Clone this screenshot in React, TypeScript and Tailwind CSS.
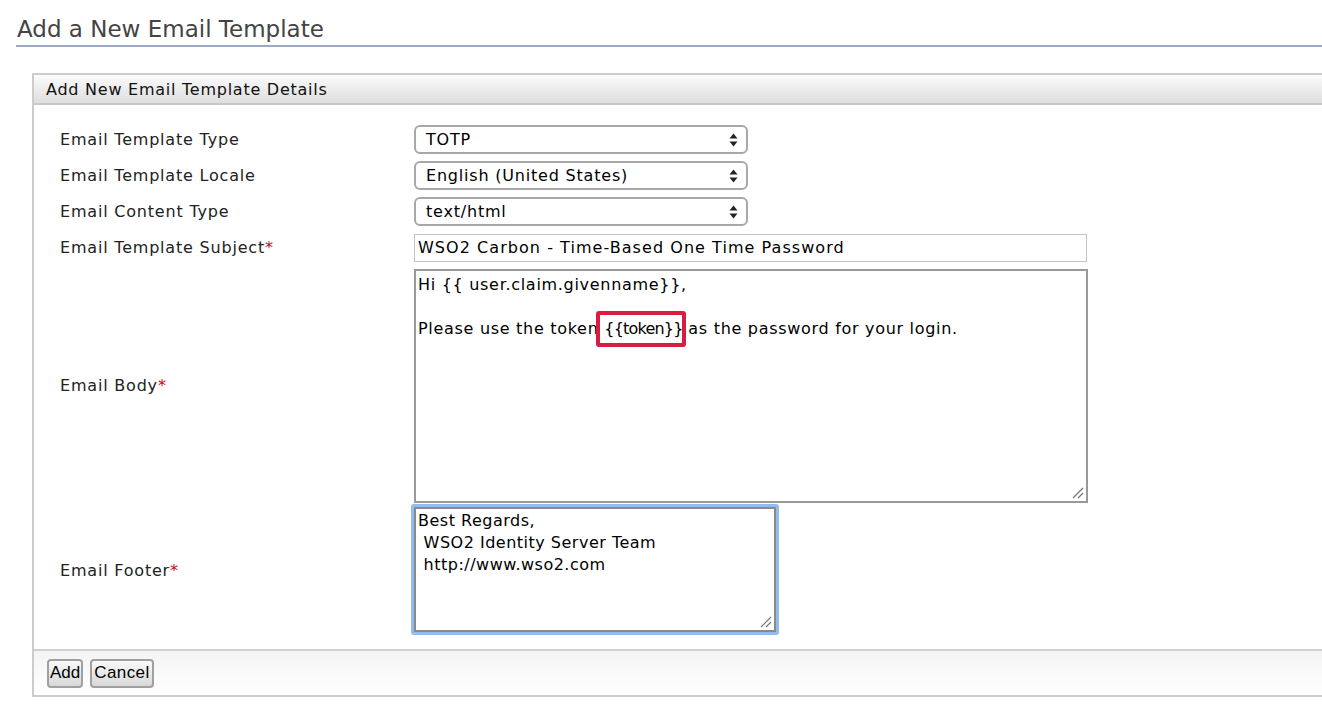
import React from "react";

function SelectArrows() {
  return (
    <svg width="9" height="14" viewBox="0 0 9 14" className="absolute right-[8px] top-1/2 -translate-y-1/2">
      <path d="M4.5 0.5 L8.5 5.5 L0.5 5.5 Z" fill="#222" />
      <path d="M4.5 13.5 L8.5 8.5 L0.5 8.5 Z" fill="#222" />
    </svg>
  );
}

function Grip() {
  return (
    <svg width="12" height="12" viewBox="0 0 12 12" className="absolute right-[2px] bottom-[2px]">
      <path d="M1 11 L11 1" stroke="#777" strokeWidth="1.2" />
      <path d="M6 11 L11 6" stroke="#777" strokeWidth="1.2" />
    </svg>
  );
}

function Select({ value }: { value: string }) {
  return (
    <div className="relative h-[29px] w-[334px] rounded-[6px] border-2 border-[#a8a8a8] bg-white pl-[10px] text-[16px] leading-[25px] tracking-[0.8px] text-black">
      {value}
      <SelectArrows />
    </div>
  );
}

function Label({ text, required }: { text: string; required?: boolean }) {
  return (
    <div className="flex items-center text-[16px] tracking-[0.8px] text-[#222]">
      {text}
      {required && <span className="text-[#d4001a]">*</span>}
    </div>
  );
}

export default function App() {
  const font = { fontFamily: '"DejaVu Sans", Verdana, sans-serif' };

  return (
    <div className="min-h-[726px] w-[1322px] overflow-hidden bg-white" style={font}>
      <div className="ml-4 border-b-2 border-[#9aaac8] pb-[1px] pt-[14px]">
        <h1 className="pl-[1px] text-[23px] leading-[30px] text-[#444]">Add a New Email Template</h1>
      </div>

      <div className="ml-[32px] mt-[26px] w-[1310px] border-2 border-r-0 border-[#cccccc]">
        <div className="h-[30px] border-b-2 border-[#c8c8c8] bg-gradient-to-b from-[#fbfbfb] to-[#dedede] pl-[12px] text-[16px] leading-[29px] tracking-[0.75px] text-[#111]">
          Add New Email Template Details
        </div>

        <div className="grid grid-cols-[354px_auto] gap-y-[7px] pb-[14px] pl-[26px] pt-[20px]">
          <Label text="Email Template Type" />
          <Select value="TOTP" />

          <Label text="Email Template Locale" />
          <Select value="English (United States)" />

          <Label text="Email Content Type" />
          <Select value="text/html" />

          <Label text="Email Template Subject" required />
          <div className="mt-[1px] h-[28px] w-[673px] border border-[#c4c4c4] bg-white pl-[3px] text-[16px] leading-[26px] tracking-[1.05px] text-black">
            WSO2 Carbon - Time-Based One Time Password
          </div>

          <Label text="Email Body" required />
          <div className="relative h-[234px] w-[674px] border-2 border-[#999] bg-white px-[2px] pt-[3px] text-[16px] leading-[22px] tracking-[0.7px] text-black">
            <div>Hi {"{{ user.claim.givenname}}"},</div>
            <div className="mt-[22px]">
              Please use the token{" "}
              <span className="relative tracking-[-0.8px]">
                {"{{token}}"}
                <span className="absolute -bottom-[9px] -left-[8px] -right-[3px] -top-[8px] rounded-[3px] border-[4px] border-[#d81e40]" />
              </span>{" "}
              as the password for your login.
            </div>
            <Grip />
          </div>

          <div className="-mt-[4px] flex items-center text-[16px] tracking-[0.8px] text-[#222]">
            Email Footer<span className="text-[#d4001a]">*</span>
          </div>
          <div className="-ml-[3px] -mt-[6px] w-[368px] rounded-[3px] border-[3px] border-[#8fbdf2] bg-white">
            <div className="relative h-[125px] border-2 border-[#8a8a8a] px-[2px] pt-[1px] text-[16px] leading-[22px] tracking-[0.5px] text-black">
              <div>Best Regards,</div>
              <div>&nbsp;WSO2 Identity Server Team</div>
              <div>&nbsp;http://www.wso2.com</div>
              <Grip />
            </div>
          </div>
        </div>

        <div className="flex h-[46px] items-center gap-[7px] border-t-2 border-[#d0d0d0] bg-gradient-to-b from-[#f4f4f4] to-white pl-[13px]" style={{ fontFamily: '"Liberation Sans", Arial, sans-serif' }}>
          <button className="h-[29px] rounded-[4px] border-2 border-[#a0a0a0] bg-gradient-to-b from-[#fafafa] to-[#d8d8d8] px-[1px] text-[17px] leading-[22px] text-black">
            Add
          </button>
          <button className="h-[29px] rounded-[4px] border-2 border-[#a0a0a0] bg-gradient-to-b from-[#fafafa] to-[#d8d8d8] px-[2px] text-[17px] leading-[22px] tracking-[0.4px] text-black">
            Cancel
          </button>
        </div>
      </div>
    </div>
  );
}
